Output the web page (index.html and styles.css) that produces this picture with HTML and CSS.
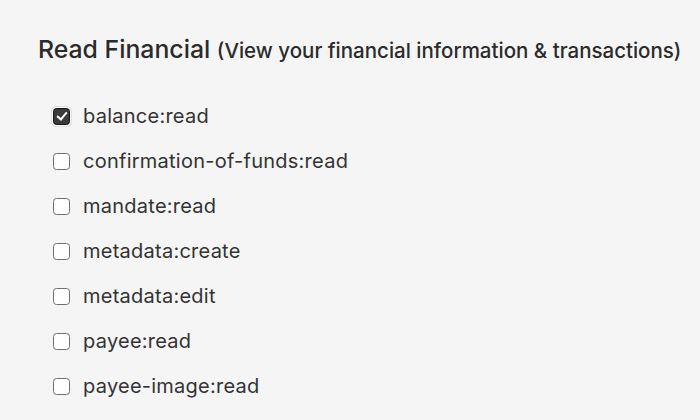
FILE: index.html
```html
<!DOCTYPE html>
<html>
<head>
<meta charset="utf-8">
<link rel="stylesheet" href="styles.css">
</head>
<body>
<section class="scope-group">
  <h2 class="title">Read Financial <span class="sub">(View your financial information &amp; transactions)</span></h2>
  <ul class="scopes">
    <li><label class="scope"><input type="checkbox" checked><span>balance:read</span></label></li>
    <li><label class="scope"><input type="checkbox"><span>confirmation-of-funds:read</span></label></li>
    <li><label class="scope"><input type="checkbox"><span>mandate:read</span></label></li>
    <li><label class="scope"><input type="checkbox"><span>metadata:create</span></label></li>
    <li><label class="scope"><input type="checkbox"><span>metadata:edit</span></label></li>
    <li><label class="scope"><input type="checkbox"><span>payee:read</span></label></li>
    <li><label class="scope"><input type="checkbox"><span>payee-image:read</span></label></li>
  </ul>
</section>
</body>
</html>
```

FILE: styles.css
```css
html, body {
  margin: 0;
  padding: 0;
  background: #f5f5f5;
}
body {
  font-family: Inter, "Noto Sans", sans-serif;
  color: #333333;
}
.scope-group {
  padding: 35px 0 0 38px;
}
.title {
  margin: 0;
  font-size: 24.8px;
  font-weight: 500;
  line-height: 28px;
  color: #2b2b2b;
}
.sub {
  font-size: 20.5px;
  font-weight: 500;
}
.scopes {
  list-style: none;
  margin: 39px 0 0 0;
  padding: 0 0 0 15px;
  display: flex;
  flex-direction: column;
  gap: 21px;
}
.scope {
  display: flex;
  align-items: center;
  gap: 13px;
  font-size: 20px;
  letter-spacing: 0.25px;
  line-height: 24px;
  color: #333;
}
.scope input {
  appearance: none;
  -webkit-appearance: none;
  flex: none;
  margin: 0;
  width: 17px;
  height: 17px;
  border: 1.5px solid #6f6f6f;
  border-radius: 3.5px;
  background: #fff;
  box-sizing: border-box;
  position: relative;
}
.scope input:checked {
  background: #3a3a3a;
  border-color: #111;
  box-shadow: 0 0 0 1px #fff, 0 0 0 2px #ddd;
}
.scope input:checked::after {
  content: "";
  position: absolute;
  left: 4.5px;
  top: 1px;
  width: 4px;
  height: 8px;
  border: solid #fff;
  border-width: 0 2px 2px 0;
  transform: rotate(40deg);
}
```
